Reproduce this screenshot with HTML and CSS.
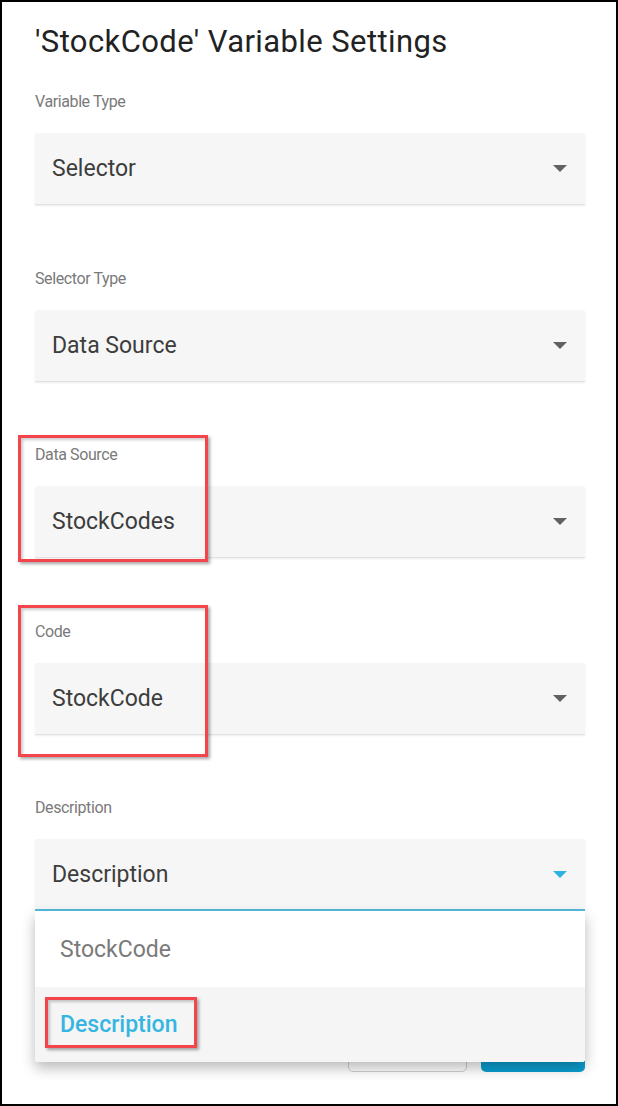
FILE: index.html
```html
<!DOCTYPE html>
<html lang="en">

<head>
  <meta charset="UTF-8" />
  <title>Variable Settings</title>
  <link rel="stylesheet" href="styles.css">
</head>

<body>
  <div class="frame">
    <h1 class="title">'StockCode' Variable Settings</h1>

    <div class="field">
      <div class="label">Variable Type</div>
      <div class="select">
        <span class="value">Selector</span>
        <span class="arrow"></span>
      </div>
    </div>

    <div class="field">
      <div class="label">Selector Type</div>
      <div class="select">
        <span class="value">Data Source</span>
        <span class="arrow"></span>
      </div>
    </div>

    <div class="field">
      <div class="label">Data Source</div>
      <div class="select">
        <span class="value">StockCodes</span>
        <span class="arrow"></span>
      </div>
      <div class="mark mark-source"></div>
    </div>

    <div class="field">
      <div class="label">Code</div>
      <div class="select">
        <span class="value">StockCode</span>
        <span class="arrow"></span>
      </div>
      <div class="mark mark-code"></div>
    </div>

    <div class="field field-open">
      <div class="label">Description</div>
      <div class="select focused">
        <span class="value">Description</span>
        <span class="arrow"></span>
      </div>
      <div class="menu">
        <div class="menu-item">StockCode</div>
        <div class="menu-item selected">
          Description
          <div class="mark mark-item"></div>
        </div>
      </div>
    </div>

    <div class="actions">
      <button class="btn btn-outline">Cancel</button>
      <button class="btn btn-primary">Save</button>
    </div>
  </div>
</body>

</html>
```

FILE: styles.css
```css
html,
body {
  margin: 0;
  padding: 0;
  background-color: #ffffff;
  font-family: Roboto, 'Noto Sans', sans-serif;
}

.frame {
  box-sizing: border-box;
  width: 618px;
  height: 1106px;
  border: 2px solid #000000;
  padding: 24px 31px 0 33px;
  overflow: hidden;
}

.title {
  margin: 0;
  font-size: 31px;
  font-weight: 400;
  line-height: 32px;
  letter-spacing: 0.4px;
  color: #222222;
}

.field {
  position: relative;
  margin-top: 34px;
}

.field + .field {
  margin-top: 63.5px;
}

.label {
  font-size: 16px;
  line-height: 20px;
  letter-spacing: -0.4px;
  color: #7a7a7a;
}

.select {
  box-sizing: border-box;
  display: flex;
  align-items: center;
  justify-content: space-between;
  height: 72px;
  margin-top: 21px;
  padding: 0 18px 0 17px;
  background-color: #f6f6f6;
  border-bottom: 1px solid #e2e2e2;
  border-radius: 2px 2px 0 0;
  box-shadow: 0 1px 2px rgba(0, 0, 0, 0.08);
}

.value {
  font-size: 23px;
  color: #3d3d3d;
}

.arrow {
  width: 0;
  height: 0;
  border-left: 7px solid transparent;
  border-right: 7px solid transparent;
  border-top: 7px solid #616161;
}

.select.focused {
  border-bottom: 2px solid #56bcdc;
}

.select.focused .arrow {
  border-top-color: #2bb3e3;
}

.menu {
  position: absolute;
  top: 100%;
  left: 0;
  right: 0;
  z-index: 5;
  background-color: #ffffff;
  border-radius: 0 0 3px 3px;
  box-shadow: 0 6px 14px rgba(0, 0, 0, 0.28);
}

.menu-item {
  position: relative;
  display: flex;
  align-items: center;
  height: 76px;
  padding-left: 25px;
  font-size: 23px;
  color: #7a7a7a;
}

.menu-item.selected {
  height: 75px;
  background-color: #f5f5f5;
  color: #35b6e2;
  font-weight: 500;
  border-radius: 0 0 3px 3px;
}

.actions {
  display: flex;
  justify-content: flex-end;
  gap: 14px;
  margin-top: 125px;
}

.btn {
  height: 36px;
  border-radius: 5px;
  font-family: inherit;
  font-size: 15px;
  color: transparent;
}

.btn-outline {
  width: 119px;
  background-color: #ffffff;
  border: 1px solid #cfcfcf;
}

.btn-primary {
  width: 104px;
  background-color: #0b9fd1;
  border: none;
}

.mark {
  position: absolute;
  box-sizing: border-box;
  border: 3px solid #f3454b;
  box-shadow: 2px 2px 3px rgba(0, 0, 0, 0.35), inset 2px 2px 3px rgba(0, 0, 0, 0.2);
  z-index: 6;
}

.mark-source {
  top: -10px;
  left: -17px;
  width: 190px;
  height: 127px;
}

.mark-code {
  top: -17px;
  left: -17px;
  width: 190px;
  height: 152px;
}

.mark-item {
  top: 10px;
  left: 10px;
  width: 152px;
  height: 51px;
}
```
